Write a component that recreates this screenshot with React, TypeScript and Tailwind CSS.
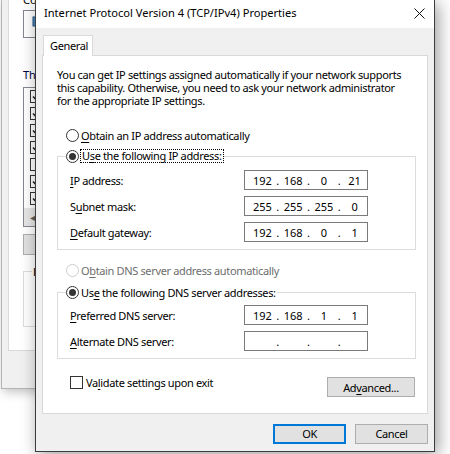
import { Fragment } from "react";

const font = { fontFamily: '"Noto Sans", "Open Sans", sans-serif' };

const Radio = ({ checked, disabled }: { checked?: boolean; disabled?: boolean }) => (
  <span
    className={`flex h-[13px] w-[13px] shrink-0 items-center justify-center rounded-full border bg-white ${
      disabled ? "border-[#cccccc]" : "border-[#333333]"
    }`}
  >
    {checked && <span className="h-[7px] w-[7px] rounded-full bg-[#333333]" />}
  </span>
);

const Key = ({ c }: { c: string }) => <span className="underline underline-offset-2">{c}</span>;

const IpField = ({ parts }: { parts: string[] }) => (
  <div className="flex h-[20px] w-[124px] items-center border border-[#7a7a7a] bg-white pl-[5px] tracking-normal">
    {parts.map((p, i) => (
      <Fragment key={i}>
        <span className="w-[25px] text-center">{p}</span>
        {i < 3 && <span className="w-[6px] text-center">.</span>}
      </Fragment>
    ))}
  </div>
);

const Row = ({ label, parts }: { label: React.ReactNode; parts: string[] }) => (
  <div className="flex items-center pl-[4px]">
    <span className="w-[174px]">{label}</span>
    <IpField parts={parts} />
  </div>
);

const ListCheck = ({ on }: { on: boolean }) => (
  <span className="flex h-[13px] w-[13px] items-center justify-center border border-[#333333] bg-white">
    {on && (
      <svg width="9" height="9" viewBox="0 0 9 9">
        <path d="M1 4.5 L3.5 7 L8 1.5" fill="none" stroke="#222" strokeWidth="1.6" />
      </svg>
    )}
  </span>
);

const BackWindow = () => (
  <div className="absolute left-[1px] top-0 h-[389px] w-[120px] border-b border-l border-[#b4b4b4] bg-[#f0f0f0] pl-[6px] shadow-[2px_3px_10px_rgba(0,0,0,0.25)]">
    <div className="flex h-[351px] flex-col whitespace-nowrap border border-t-0 border-[#d9d9d9] bg-white pl-[14px] leading-[13px] text-black">
      <span className="-mt-[7px]">Connect using:</span>
      <div className="mt-[4px] flex h-[28px] items-center border border-[#828790] bg-white pl-[8px]">
        <svg width="14" height="16" viewBox="0 0 14 16">
          <rect x="1" y="1" width="11" height="9" fill="#4a90c8" stroke="#25557f" />
          <rect x="3" y="11" width="7" height="3" fill="#5fae4c" />
        </svg>
      </div>
      <span className="mt-[30px] text-[#000040]">This connection uses the following items:</span>
      <div className="mt-[6px] flex h-[140px] flex-col border border-[#828790] bg-white">
        {[true, true, true, true, false, true, true].map((on, i) => (
          <div key={i} className="flex h-[17px] items-center pl-[6px]">
            <ListCheck on={on} />
          </div>
        ))}
        <div className="mt-auto flex h-[18px] items-center bg-[#e6e6e6] pl-[6px] text-[10px] text-[#606060]">◀</div>
      </div>
      <div className="mt-[7px] h-[21px] border border-[#adadad] bg-[#e1e1e1]" />
      <fieldset className="mt-[10px] h-[62px] border border-[#dcdcdc] pl-[8px]">
        <legend className="px-[1px]">Description</legend>
      </fieldset>
    </div>
  </div>
);

export default function App() {
  return (
    <div className="relative h-[454px] w-[450px] overflow-hidden bg-white text-[11px] text-black" style={font}>
      <BackWindow />
      <div className="absolute left-[35px] top-0 flex h-[452px] w-[400px] flex-col border-x border-b border-[#3c3c3c] bg-[#f0f0f0] shadow-[3px_3px_16px_rgba(0,0,0,0.4)]">
        <div className="flex h-[28px] items-center justify-between bg-white pb-[2px] pl-[8px] pr-[9px] text-[11.1px]">
          <span>Internet Protocol Version 4 (TCP/IPv4) Properties</span>
          <svg width="11" height="11" viewBox="0 0 11 11">
            <path d="M0.5 0.5 L10.5 10.5 M10.5 0.5 L0.5 10.5" stroke="#111" strokeWidth="1" />
          </svg>
        </div>
        <div className="flex flex-col px-[6px] pt-[7px] tracking-[-0.35px]">
          <div className="relative z-10 -mb-[1px] ml-[1px] flex h-[21px] w-[50px] items-center border-x border-t border-[#d9d9d9] bg-white pl-[6px]">
            General
          </div>
          <div className="flex h-[359px] flex-col whitespace-nowrap border border-[#d9d9d9] bg-white pl-[14px] pt-[12px] leading-[13px]">
            <p>
              You can get IP settings assigned automatically if your network supports
              <br />
              this capability. Otherwise, you need to ask your network administrator
              <br />
              for the appropriate IP settings.
            </p>
            <div className="ml-[9px] mt-[21px] flex h-[14px] items-center gap-[2px]">
              <Radio />
              <span>
                <Key c="O" />
                btain an IP address automatically
              </span>
            </div>
            <fieldset className="mr-[11px] mt-[7px] flex flex-col gap-[6px] border border-[#dcdcdc] pb-[7px] pl-[8px]">
              <legend className="mb-[7px]">
                <span className="flex h-[14px] items-center gap-[1px]">
                  <Radio checked />
                  <span className="border border-dotted border-black px-[1px] leading-[12px]">
                    U<Key c="s" />e the following IP address:
                  </span>
                </span>
              </legend>
              <Row label={<><Key c="I" />P address:</>} parts={["192", "168", "0", "21"]} />
              <Row label={<>S<Key c="u" />bnet mask:</>} parts={["255", "255", "255", "0"]} />
              <Row label={<><Key c="D" />efault gateway:</>} parts={["192", "168", "0", "1"]} />
            </fieldset>
            <div className="ml-[9px] mt-[13px] flex h-[14px] items-center gap-[2px] text-[#6d6d6d]">
              <Radio disabled />
              <span>
                O<Key c="b" />tain DNS server address automatically
              </span>
            </div>
            <fieldset className="mr-[11px] mt-[8px] flex flex-col gap-[6px] border border-[#dcdcdc] pb-[7px] pl-[8px]">
              <legend className="mb-[6px]">
                <span className="flex h-[14px] items-center gap-[2px] pr-[1px]">
                  <Radio checked />
                  <span>
                    Us<Key c="e" /> the following DNS server addresses:
                  </span>
                </span>
              </legend>
              <Row label={<><Key c="P" />referred DNS server:</>} parts={["192", "168", "1", "1"]} />
              <Row label={<><Key c="A" />lternate DNS server:</>} parts={["", "", "", ""]} />
            </fieldset>
            <div className="mr-[12px] mt-[17px] flex items-start justify-between">
              <div className="ml-[13px] flex h-[13px] items-center gap-[3px]">
                <span className="h-[13px] w-[13px] border border-[#333333] bg-white" />
                <span>
                  Va<Key c="l" />idate settings upon exit
                </span>
              </div>
              <button className="mt-[1px] h-[20px] w-[88px] border border-[#adadad] bg-[#e1e1e1]">
                Ad<Key c="v" />anced...
              </button>
            </div>
          </div>
          <div className="mt-[10px] flex justify-end gap-[9px]">
            <button className="h-[20px] w-[73px] border-2 border-[#0078d7] bg-[#e1e1e1]">OK</button>
            <button className="h-[20px] w-[73px] border border-[#adadad] bg-[#e1e1e1]">Cancel</button>
          </div>
        </div>
      </div>
    </div>
  );
}
